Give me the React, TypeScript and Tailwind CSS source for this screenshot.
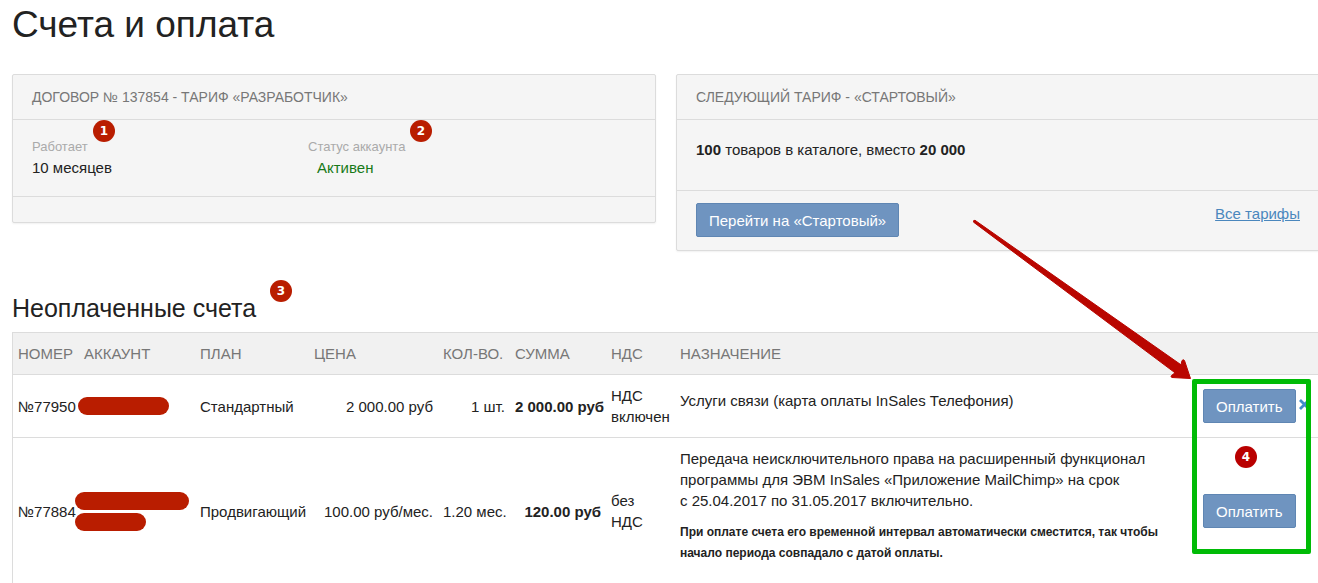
import type { ReactNode } from "react";
import clsx from "clsx";

type Invoice = {
  id: string;
  account: string[];
  plan: string;
  price: string;
  amount: string;
  total: string;
  vat: string;
  purpose: string;
  note?: string;
  removable?: boolean;
};

const invoices: Invoice[] = [
  {
    id: "№77950",
    account: ["w-[91px] -ml-1.5"],
    plan: "Стандартный",
    price: "2 000.00 руб",
    amount: "1 шт.",
    total: "2 000.00 руб",
    vat: "НДС включен",
    purpose: "Услуги связи (карта оплаты InSales Телефония)",
    removable: true,
  },
  {
    id: "№77884",
    account: ["w-[114px] -ml-[9px]", "w-[71px] -ml-[9px]"],
    plan: "Продвигающий",
    price: "100.00 руб/мес.",
    amount: "1.20 мес.",
    total: "120.00 руб",
    vat: "без НДС",
    purpose:
      "Передача неисключительного права на расширенный функционал программы для ЭВМ InSales «Приложение MailChimp» на срок с\u00a025.04.2017 по 31.05.2017 включительно.",
    note: "При оплате счета его временной интервал автоматически сместится, так чтобы начало периода совпадало с датой оплаты.",
  },
];

const columns = ["Номер", "Аккаунт", "План", "Цена", "Кол-во.", "Сумма", "НДС", "Назначение"];

function Badge({ children, className }: { children: ReactNode; className?: string }) {
  return (
    <span
      className={clsx(
        "absolute flex size-[22px] items-center justify-center rounded-full font-['DejaVu_Sans'] text-xs leading-none font-bold text-white",
        className
      )}
    >
      {children}
    </span>
  );
}

function Button({ children }: { children: ReactNode }) {
  return (
    <button
      type="button"
      className="h-[34px] shrink-0 rounded-xs border border-[#5f86b3] bg-[#6f94c0] px-3 whitespace-nowrap text-white"
    >
      {children}
    </button>
  );
}

function Panel({ title, children, footer }: { title: string; children: ReactNode; footer: ReactNode }) {
  return (
    <section className="rounded-xs border border-[#dcdcdc] bg-[#f5f5f5] shadow-[0_1px_2px_rgba(0,0,0,0.06)]">
      <h3 className="border-b border-[#dcdcdc] px-[19px] py-[11px] text-sm leading-[22px] text-[#777] uppercase">
        {title}
      </h3>
      {children}
      <div className="border-t border-[#dcdcdc] px-[19px]">{footer}</div>
    </section>
  );
}

export default function App() {
  return (
    <div className="overflow-hidden bg-white pl-3 font-['Liberation_Sans',sans-serif] text-[15px] leading-[21px] text-[#222]">
      <main className="-mr-0.5">
        <h1 className="pt-1 text-[37px] leading-[42px]">Счета и оплата</h1>

        <div className="mt-7 grid grid-cols-2 items-start gap-5">
          <Panel title="Договор № 137854 - тариф «Разработчик»" footer={<div className="h-[25px]" />}>
            <dl className="flex px-[19px] pt-4 pb-[18px]">
              <div className="relative w-[276px]">
                <dt className="text-[13px] text-[#aaa]">Работает</dt>
                <dd>10 месяцев</dd>
                <Badge className="-top-4 left-[61px] bg-[#b91d00]">1</Badge>
              </div>
              <div className="relative">
                <dt className="text-[13px] text-[#aaa]">Статус аккаунта</dt>
                <dd className="pl-[9px] text-[#187a18]">Активен</dd>
                <Badge className="-top-4 left-[102px] bg-[#b91d00]">2</Badge>
              </div>
            </dl>
          </Panel>

          <Panel
            title="Следующий тариф - «Стартовый»"
            footer={
              <div className="flex items-start justify-between pt-3 pb-[13px]">
                <Button>Перейти на «Стартовый»</Button>
                <a href="#tariffs" className="text-[#4a87bd] underline">
                  Все тарифы
                </a>
              </div>
            }
          >
            <p className="px-[19px] pt-[19px] pb-[30px]">
              <b>100</b> товаров в каталоге, вместо <b>20 000</b>
            </p>
          </Panel>
        </div>

        <h2 className="relative mt-[41px] w-fit text-[25px] leading-8">
          Неоплаченные счета
          <Badge className="-top-3 left-[258px] bg-[#b91d00]">3</Badge>
        </h2>

        <div className="relative mt-2">
          <div className="border border-[#dcdcdc]">
            <table className="w-full table-fixed border-separate border-spacing-0">
              <colgroup>
                <col className="w-[66px]" />
                <col className="w-[116px]" />
                <col className="w-[114px]" />
                <col className="w-[129px]" />
                <col className="w-[72px]" />
                <col className="w-[96px]" />
                <col className="w-[69px]" />
                <col />
                <col className="w-[121px]" />
              </colgroup>
              <thead>
                <tr className="bg-[#f1f1f1] text-left text-[#777] uppercase">
                  {columns.map((column) => (
                    <th key={column} className="border-b border-[#dcdcdc] px-[5px] py-2.5 font-normal whitespace-nowrap">
                      {column}
                    </th>
                  ))}
                  <td className="border-b border-[#dcdcdc]" />
                </tr>
              </thead>
              <tbody className="[&_td]:border-b [&_td]:border-[#dcdcdc] [&_td]:px-[5px] [&_td]:py-2.5">
                {invoices.map((invoice) => (
                  <tr key={invoice.id}>
                    <td className="whitespace-nowrap">{invoice.id}</td>
                    <td>
                      <div className="flex flex-col gap-[3px]">
                        {invoice.account.map((bar) => (
                          <span key={bar} className={clsx("relative h-[18px] rounded-full bg-[#b91d00]", bar)} />
                        ))}
                      </div>
                    </td>
                    <td>{invoice.plan}</td>
                    <td className="text-right">{invoice.price}</td>
                    <td className="text-right whitespace-nowrap">{invoice.amount}</td>
                    <td className="text-right font-bold whitespace-nowrap">{invoice.total}</td>
                    <td>{invoice.vat}</td>
                    <td>
                      <p className="mb-[11px] max-w-[480px]">{invoice.purpose}</p>
                      {invoice.note && <p className="mb-2.5 text-xs leading-[21px] font-bold">{invoice.note}</p>}
                    </td>
                    <td>
                      <div className="flex items-center gap-[3px]">
                        <Button>Оплатить</Button>
                        {invoice.removable && (
                          <button type="button" aria-label="Удалить счет" className="mb-1 shrink-0">
                            <svg viewBox="0 0 11 11" className="size-[11px]" stroke="#428bca" strokeWidth="2.8">
                              <path d="M1 1l9 9M10 1l-9 9" />
                            </svg>
                          </button>
                        )}
                      </div>
                    </td>
                  </tr>
                ))}
              </tbody>
            </table>
          </div>

          {/* pointer to the pay buttons */}
          <div className="pointer-events-none absolute top-[47px] right-[9px] h-[175px] w-[119px] rounded-xs border-5 border-[#00bb06]">
            <Badge className="top-[62px] left-[38px] bg-[#b90000]">4</Badge>
          </div>
          <svg
            viewBox="970 216 224 168"
            className="pointer-events-none absolute -top-[116px] right-[126px] h-[168px] w-[224px]"
            fill="#b90600"
            stroke="#b90600"
            strokeLinejoin="round"
          >
            <path d="M975 220.3L1181 364.8L1182 360.5Q1183.5 359 1184.5 360.5L1190.5 378.5L1172 377.5Q1170 376.5 1171.5 375.5L1175 372.8L973.6 222.2Q973 220 975 220.3Z" />
          </svg>
        </div>
      </main>
    </div>
  );
}
